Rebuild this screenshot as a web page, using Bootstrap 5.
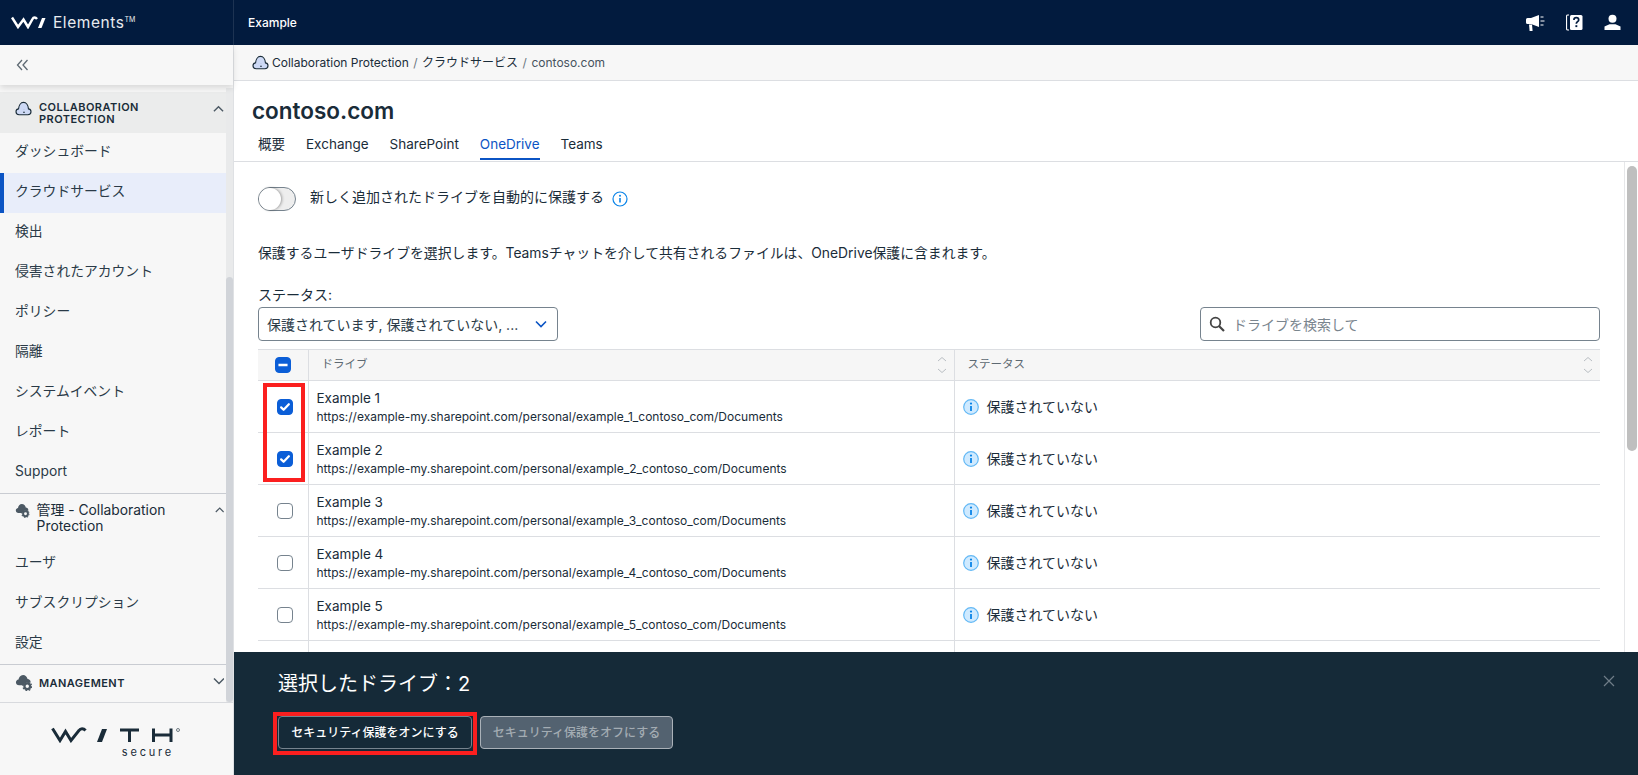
<!DOCTYPE html>
<html lang="ja">
<head>
<meta charset="utf-8">
<title>contoso.com</title>
<link href="https://cdn.jsdelivr.net/npm/bootstrap@5.3.0/dist/css/bootstrap.min.css" rel="stylesheet">
<style>
html,body{height:775px;overflow:hidden}
body{font-family:Inter,"Noto Sans CJK JP",sans-serif;font-size:14px;color:#1a2c39;background:#fff}
.app-top{height:45px;background:#021b3e;color:#fff;padding:0}
.brand-cell{width:234px;height:45px;padding-left:11px;gap:7px;border-right:1px solid #1d3352;font-size:15.5px;letter-spacing:.55px;color:#e8ebef}
.brand-cell sup{font-size:7px;top:-.9em;letter-spacing:0}
.top-title{padding-left:14px;font-size:12px;font-weight:500}
.top-tools{gap:21px;padding-right:17px}
.app-body{height:730px}
.side{width:234px;flex:none;background:#f7f7f7;border-right:1px solid #dfe1e4}
.side-collapse{height:40px;padding-left:16px;box-shadow:0 3px 6px rgba(0,0,0,.12);position:relative;z-index:2}
.side-scroll{height:614px;margin-top:3px;padding-top:4px;border-right:7px solid #e9eaeb;overflow:visible}
.side-thumb{right:-7px;top:189px;width:7px;height:425px;background:#d1d4d9;border-radius:4px}
.side-head{padding:0 2px 0 15px;gap:7px}
.side-head.is-open{height:41px;background:#ebecec;align-items:center}
.cap{font-size:11px;font-weight:600;letter-spacing:.45px;line-height:12px}
.side-link{height:40px;padding:0 0 3px 15px;color:#2a3a47;font-size:13.8px;border-radius:0;display:flex;align-items:center}
.side-link.is-on{background:#e8edfa;border-left:4px solid #0b54c4;padding-left:11px}
.side-rule{border-top:1px solid #c9ccd2}
.side-logo{height:73px;border-top:1px solid #d8dade}
.sec-title{font-size:13.85px;line-height:16px}
.crumbs{height:36px;background:#f7f7f7;border-bottom:1px solid #dcdee2;padding-left:18px;font-size:12px;gap:3px}
.crumbs .breadcrumb{--bs-breadcrumb-margin-bottom:0;--bs-breadcrumb-item-padding-x:4.500px;--bs-breadcrumb-divider-color:#6b7680;--bs-breadcrumb-item-active-color:#46535e}
.crumbs a{color:#1a2c39;text-decoration:none}
.page-head{height:81px;border-bottom:1px solid #dcdee2;padding:15px 0 0 18px}
.page-head h1{font-size:22.5px;font-weight:600;margin:0 0 4px;line-height:30px}
.page-tabs{--bs-nav-link-padding-x:0;--bs-nav-link-padding-y:0;gap:21px;margin-left:6px;font-size:13.5px}
.page-tabs .nav-link{color:#1a2c39;height:30px;line-height:24px;padding-top:2px}
.page-tabs .nav-link.active{color:#0b54c4;border-bottom:2px solid #0b54c4}
.work{height:calc(100% - 117px);overflow:hidden}
.work-in{flex:1;min-width:0;padding:25px 24px 0 24px}
.vbar{width:14px;border-left:1px solid #e6e7e9;flex:none;padding:4px 1px 0 2px}
.vbar-thumb{height:285px;background:#bfbfbf;border-radius:5px}
.form-switch .form-check-input.big-sw{width:38px;height:24px;margin:0;border-color:#76838e;background-color:#eee;--bs-form-switch-bg:none}
.knob{width:22px;height:22px;left:1px;top:1px;background:#fff;border-radius:50%;box-shadow:1px 0 3px rgba(0,0,0,.35)}
.sw-label{margin-left:14px;font-size:14px;margin-top:-5px}
.intro{margin:32px 0 22px;font-size:13.85px;line-height:20px;height:20px;white-space:nowrap}
.stat-label{font-size:14px;line-height:20px;margin-bottom:2px}
.pick{width:300px;height:34px;border:1px solid #76838e;border-radius:4px;padding:0 10px 0 8px;font-size:14px;color:#2a3a47}
.find{width:400px;height:34px}
.find-box{height:34px;border:1px solid #76838e;border-radius:4px;padding:0 8px;gap:8px}
.find-box input{border:0;outline:0;padding:0;background:none;font-size:14px;flex:1;box-shadow:none}
.find-box input::placeholder{color:#7a858e}
.grid-tbl{--bs-table-border-color:#dcdee2;margin:8px 0 0;table-layout:fixed;width:1342px;font-size:13px}
.grid-tbl th{background:#f6f6f6;height:31px;padding:0 9px 0 13px;font-size:11.5px;font-weight:400;color:#5d6972;vertical-align:middle;border-top:1px solid #dcdee2;border-left:1px solid #dcdee2}
.grid-tbl th:first-child,.grid-tbl td:first-child{border-left:0;text-align:center;padding:0}
.grid-tbl td:first-child{padding-left:4px}
.grid-tbl td{height:52px;padding:0 8px;vertical-align:middle;border-left:1px solid #dcdee2;color:#1a2c39}
.w-chk{width:50px}
.drive-name{font-size:13.5px;line-height:18px;padding-top:1px}
.drive-url{font-size:12px;line-height:16px;margin-top:2px}
.grid-tbl .form-check-input{width:16px;height:16px;margin:0;vertical-align:middle;border-color:#76838e;float:none;--bs-form-check-bg:#fff;border-radius:4px}
.grid-tbl .form-check-input:checked,.grid-tbl .form-check-input:indeterminate{background-color:#0b5ed7;border-color:#0b5ed7}
.grid-tbl .form-check-input:checked{background-image:url("data:image/svg+xml,%3csvg xmlns='http://www.w3.org/2000/svg' viewBox='0 0 20 20'%3e%3cpath fill='none' stroke='%23fff' stroke-linecap='round' stroke-linejoin='round' stroke-width='3.200' d='m4.500 10.500 3.500 3.500 7.500-8'/%3e%3c/svg%3e")}
.grid-tbl .form-check-input:indeterminate{background-image:url("data:image/svg+xml,%3csvg xmlns='http://www.w3.org/2000/svg' viewBox='0 0 20 20'%3e%3cpath fill='none' stroke='%23fff' stroke-width='3.400' d='M3.500 10h13'/%3e%3c/svg%3e")}
.grid-tbl td:last-child{font-size:14px}
.sort-ico{float:right;margin-right:-3px}
.stat-cell{gap:8px}
.red-a{left:5px;top:34px;width:42px;height:99px;border:4px solid #fb1f1f}
.red-b{left:39px;top:60px;width:204px;height:43px;border:4px solid #fb1f1f}
.tray{left:234px;right:0;top:652px;height:123px;background:#152a38;color:#fff;z-index:5}
.tray h2{font-size:20px;font-weight:400;margin:0 0 18px;line-height:28px}
.tray-in{padding:18px 0 0 44px}
.btn-on{--bs-btn-color:#fff;--bs-btn-border-color:#76838e;--bs-btn-bg:#152a38;width:194px;height:33px;padding:0;font-size:12px;font-weight:500;border-radius:4px}
.btn-off{--bs-btn-disabled-color:#a3acb3;--bs-btn-disabled-bg:#536270;--bs-btn-disabled-border-color:#aab1b8;--bs-btn-disabled-opacity:1;width:193px;height:33px;padding:0;font-size:12px;font-weight:500;border-radius:4px;margin-left:8px}
.tray-x{right:23px;top:23px}
.secure-word{font-size:11px;letter-spacing:2.800px;line-height:14px;margin:2px 59px 0 0;color:#1a2c39}
.mgmt-head{padding-top:9px;padding-bottom:8px}
.admin-head{padding-top:8px;padding-bottom:10px}
</style>
</head>
<body>
<svg width="0" height="0" class="position-absolute">
<defs>
<symbol id="cloud" viewBox="0 0 18 16"><path d="M4.300 14.600C2.300 14.600 1 13.200 1 11.500c0-1.700 1.200-2.900 2.700-3.100C4 5.200 5.800 1.500 9 1.500c3 0 5 3.300 5.300 6.900 1.600.2 2.700 1.500 2.700 3.100 0 1.700-1.300 3.100-3.300 3.100z" fill="#cdd9f5" stroke="#1a2c39" stroke-width="1.200"/><path d="M9.500 9.500v.1M8.500 12h2" stroke="#1a2c39" stroke-width="1"/></symbol>
<symbol id="cloudgear" viewBox="0 0 18 18"><path d="M4.300 12C2.300 12 1 10.700 1 9s1.200-2.900 2.700-3.100C4 3.500 5.800 1 8.500 1c2.500 0 4.300 2 4.800 4.200 1.800.2 3.200 1.400 3.200 3.100 0 .4 0 .7-.1 1H11l-2 2.700z" fill="#4c5964"/><circle cx="13" cy="13" r="3" fill="none" stroke="#4c5964" stroke-width="2.400"/><circle cx="13" cy="13" r="4.600" fill="none" stroke="#4c5964" stroke-width="1.300" stroke-dasharray="1.800 1.800"/></symbol>
<symbol id="infoi" viewBox="0 0 16 16"><circle cx="8" cy="8" r="7.300" fill="#cfeaff" stroke="#62b8f5" stroke-width="1.200"/><path d="M8 7v5" stroke="#0a84e8" stroke-width="1.800"/><circle cx="8" cy="4.600" r="1.100" fill="#0a84e8"/></symbol>
<symbol id="sorter" viewBox="0 0 12 18"><path d="M2 5l4-3.500L10 5M2 13l4 3.500L10 13" fill="none" stroke="#b9bec3" stroke-width="1"/></symbol>
<symbol id="chevup" viewBox="0 0 12 8"><path d="M1 6.500L6 1.500l5 5" fill="none" stroke="#4c5964" stroke-width="1.500"/></symbol>
</defs>
</svg>

<nav class="navbar app-top d-flex flex-nowrap justify-content-start">
  <div class="brand-cell d-flex align-items-center">
    <svg width="35" height="13" viewBox="0 0 35 13"><path d="M1 1.500l6 9.500 5.500-7.500 4.500 7.500 4.500-8C22.500 1 24.500 1 26 3" fill="none" stroke="#fff" stroke-width="2.500"/><path d="M27 12L31 2h3.500l-4 10z" fill="#fff"/></svg>
    <span>Elements<sup>TM</sup></span>
  </div>
  <div class="top-title">Example</div>
  <div class="top-tools d-flex align-items-center ms-auto">
    <svg width="20" height="18" viewBox="0 0 20 18"><path d="M1 5.500a1.500 1.500 0 0 1 1.500-1.500H6l8-3v12l-8-3H2.500A1.500 1.500 0 0 1 1 8.500z" fill="#fff"/><path d="M4 10.500h3l.6 6.500H4.600z" fill="#fff"/><path d="M15.500 3h3M15.500 7h4M15.500 11h3" stroke="#fff" stroke-width="1"/></svg>
    <svg width="17" height="17" viewBox="0 0 17 17"><path d="M3 1H1.800C1 1 .5 1.500.5 2.500v12c0 1 .5 1.500 1.300 1.500H3" fill="none" stroke="#fff" stroke-width="1.200"/><rect x="4" y="1" width="12.500" height="15" rx="1.500" fill="#fff"/><path d="M7.900 6c0-1.500 1.100-2.300 2.400-2.300s2.400.8 2.400 2.200c0 1.700-2.400 1.900-2.400 3.800" fill="none" stroke="#021b3e" stroke-width="1.700"/><rect x="9.400" y="11.200" width="1.900" height="1.900" fill="#021b3e"/></svg>
    <svg width="17" height="17" viewBox="0 0 17 17"><circle cx="8.500" cy="4.800" r="4" fill="#fff"/><path d="M.5 16v-3.500l5-2.300h6l5 2.300V16z" fill="#fff"/></svg>
  </div>
</nav>

<div class="app-body d-flex">
  <aside class="side d-flex flex-column">
    <div class="side-collapse d-flex align-items-center">
      <svg width="13" height="12" viewBox="0 0 13 12"><path d="M6 1L1.500 6 6 11M11.500 1L7 6l4.500 5" fill="none" stroke="#5d6972" stroke-width="1.300"/></svg>
    </div>
    <div class="side-scroll position-relative">
      <div class="side-head is-open d-flex">
        <svg width="17" height="15" class="flex-none mb-2"><use href="#cloud"/></svg>
        <div class="cap flex-grow-1">COLLABORATION<br>PROTECTION</div>
        <svg width="11" height="8" class="mb-2"><use href="#chevup"/></svg>
      </div>
      <nav class="nav flex-column">
        <a class="nav-link side-link" href="#">ダッシュボード</a>
        <a class="nav-link side-link is-on" href="#">クラウドサービス</a>
        <a class="nav-link side-link" href="#">検出</a>
        <a class="nav-link side-link" href="#">侵害されたアカウント</a>
        <a class="nav-link side-link" href="#">ポリシー</a>
        <a class="nav-link side-link" href="#">隔離</a>
        <a class="nav-link side-link" href="#">システムイベント</a>
        <a class="nav-link side-link" href="#">レポート</a>
        <a class="nav-link side-link" href="#">Support</a>
      </nav>
      <div class="side-rule side-head admin-head d-flex">
        <svg width="17" height="17" class="flex-none"><use href="#cloudgear"/></svg>
        <div class="sec-title flex-grow-1">管理 - Collaboration Protection</div>
        <svg width="11" height="8" class="mt-1"><use href="#chevup"/></svg>
      </div>
      <nav class="nav flex-column">
        <a class="nav-link side-link" href="#">ユーザ</a>
        <a class="nav-link side-link" href="#">サブスクリプション</a>
        <a class="nav-link side-link" href="#">設定</a>
      </nav>
      <div class="side-rule side-head mgmt-head d-flex align-items-center">
        <svg width="17" height="17" class="flex-none"><use href="#cloudgear"/></svg>
        <div class="cap flex-grow-1">MANAGEMENT</div>
        <svg width="11" height="8" class="mb-1"><path d="M1 1.500l5 5 5-5" fill="none" stroke="#4c5964" stroke-width="1.500"/></svg>
      </div>
      <div class="side-thumb position-absolute"></div>
    </div>
    <div class="side-logo d-flex flex-column align-items-center pt-4">
      <svg width="131" height="16" viewBox="0 0 131 16"><path d="M1.500 1.500l7.500 12 5.500-9 5.500 9L28 3.500C29.500 1 32.500 1 34.500 3.500" fill="none" stroke="#1a2c39" stroke-width="3"/><path d="M46 15l5-13h5l-5 13z" fill="#1a2c39"/><path d="M69 3h19M78.500 3v12M102.500 1.500V15M120 1.500V15M102.500 8h17.500" stroke="#1a2c39" stroke-width="3"/><circle cx="127" cy="3" r="1.500" fill="none" stroke="#1a2c39" stroke-width=".6"/></svg>
      <div class="align-self-end secure-word">secure</div>
    </div>
  </aside>

  <main class="flex-grow-1 d-flex flex-column" style="min-width:0">
    <div class="crumbs d-flex align-items-center">
      <svg width="17" height="15"><use href="#cloud"/></svg>
      <ol class="breadcrumb">
        <li class="breadcrumb-item"><a href="#">Collaboration Protection</a></li>
        <li class="breadcrumb-item"><a href="#">クラウドサービス</a></li>
        <li class="breadcrumb-item active">contoso.com</li>
      </ol>
    </div>
    <div class="page-head">
      <h1>contoso.com</h1>
      <ul class="nav page-tabs">
        <li class="nav-item"><a class="nav-link" href="#">概要</a></li>
        <li class="nav-item"><a class="nav-link" href="#">Exchange</a></li>
        <li class="nav-item"><a class="nav-link" href="#">SharePoint</a></li>
        <li class="nav-item"><a class="nav-link active" href="#">OneDrive</a></li>
        <li class="nav-item"><a class="nav-link" href="#">Teams</a></li>
      </ul>
    </div>
    <div class="work d-flex">
      <div class="work-in">
        <div class="form-check form-switch d-flex align-items-center p-0 m-0">
          <span class="position-relative d-inline-block">
            <input class="form-check-input big-sw d-block" type="checkbox" role="switch" aria-label="自動保護">
            <span class="knob position-absolute"></span>
          </span>
          <span class="sw-label">新しく追加されたドライブを自動的に保護する</span>
          <svg width="16" height="16" class="ms-2"><circle cx="8" cy="8" r="7" fill="none" stroke="#0a84e8" stroke-width="1.200"/><path d="M8 7v4.500" stroke="#0a84e8" stroke-width="1.600"/><circle cx="8" cy="4.700" r="1" fill="#0a84e8"/></svg>
        </div>
        <p class="intro">保護するユーザドライブを選択します。Teamsチャットを介して共有されるファイルは、OneDrive保護に含まれます。</p>
        <div class="stat-label">ステータス:</div>
        <div class="d-flex justify-content-between" style="width:1342px">
          <div class="pick d-flex align-items-center justify-content-between">
            <span>保護されています, 保護されていない, ...</span>
            <svg width="12" height="8" viewBox="0 0 12 8"><path d="M1 1.500l5 5 5-5" fill="none" stroke="#0b54c4" stroke-width="1.600"/></svg>
          </div>
          <div class="find">
            <div class="find-box d-flex align-items-center">
              <svg width="16" height="16" viewBox="0 0 16 16"><circle cx="6.500" cy="6.500" r="4.800" fill="none" stroke="#444" stroke-width="1.800"/><path d="M10 10l5 5" stroke="#444" stroke-width="2.200"/></svg>
              <input class="form-control" type="text" placeholder="ドライブを検索して" aria-label="検索">
            </div>
          </div>
        </div>
        <div class="position-relative" style="width:1342px">
        <table class="table grid-tbl">
          <thead>
            <tr>
              <th class="w-chk"><input class="form-check-input" id="allbox" type="checkbox" aria-label="すべて"></th>
              <th>ドライブ<svg class="sort-ico" width="12" height="18"><use href="#sorter"/></svg></th>
              <th>ステータス<svg class="sort-ico" width="12" height="18"><use href="#sorter"/></svg></th>
            </tr>
          </thead>
          <tbody>
            <tr><td><input class="form-check-input" type="checkbox" checked aria-label="Example 1"></td><td><div class="drive-name">Example 1</div><div class="drive-url">https://example-my.sharepoint.com/personal/example_1_contoso_com/Documents</div></td><td><div class="stat-cell d-flex align-items-center"><svg width="16" height="16"><use href="#infoi"/></svg>保護されていない</div></td></tr>
            <tr><td><input class="form-check-input" type="checkbox" checked aria-label="Example 2"></td><td><div class="drive-name">Example 2</div><div class="drive-url">https://example-my.sharepoint.com/personal/example_2_contoso_com/Documents</div></td><td><div class="stat-cell d-flex align-items-center"><svg width="16" height="16"><use href="#infoi"/></svg>保護されていない</div></td></tr>
            <tr><td><input class="form-check-input" type="checkbox" aria-label="Example 3"></td><td><div class="drive-name">Example 3</div><div class="drive-url">https://example-my.sharepoint.com/personal/example_3_contoso_com/Documents</div></td><td><div class="stat-cell d-flex align-items-center"><svg width="16" height="16"><use href="#infoi"/></svg>保護されていない</div></td></tr>
            <tr><td><input class="form-check-input" type="checkbox" aria-label="Example 4"></td><td><div class="drive-name">Example 4</div><div class="drive-url">https://example-my.sharepoint.com/personal/example_4_contoso_com/Documents</div></td><td><div class="stat-cell d-flex align-items-center"><svg width="16" height="16"><use href="#infoi"/></svg>保護されていない</div></td></tr>
            <tr><td><input class="form-check-input" type="checkbox" aria-label="Example 5"></td><td><div class="drive-name">Example 5</div><div class="drive-url">https://example-my.sharepoint.com/personal/example_5_contoso_com/Documents</div></td><td><div class="stat-cell d-flex align-items-center"><svg width="16" height="16"><use href="#infoi"/></svg>保護されていない</div></td></tr>
            <tr><td></td><td></td><td></td></tr>
          </tbody>
        </table>
        <div class="red-a position-absolute"></div>
        </div>
      </div>
      <div class="vbar"><div class="vbar-thumb"></div></div>
    </div>
  </main>
</div>

<section class="tray position-absolute">
  <div class="tray-in">
    <h2>選択したドライブ：2</h2>
    <div class="d-flex">
      <button type="button" class="btn btn-on">セキュリティ保護をオンにする</button>
      <button type="button" class="btn btn-off" disabled>セキュリティ保護をオフにする</button>
    </div>
  </div>
  <div class="red-b position-absolute"></div>
  <svg class="tray-x position-absolute" width="12" height="12" viewBox="0 0 12 12"><path d="M1 1l10 10M11 1L1 11" stroke="#6f7d88" stroke-width="1.200"/></svg>
</section>
<script src="https://cdn.jsdelivr.net/npm/bootstrap@5.3.0/dist/js/bootstrap.bundle.min.js"></script>
<script>document.getElementById('allbox').indeterminate=true;</script>
</body>
</html>
